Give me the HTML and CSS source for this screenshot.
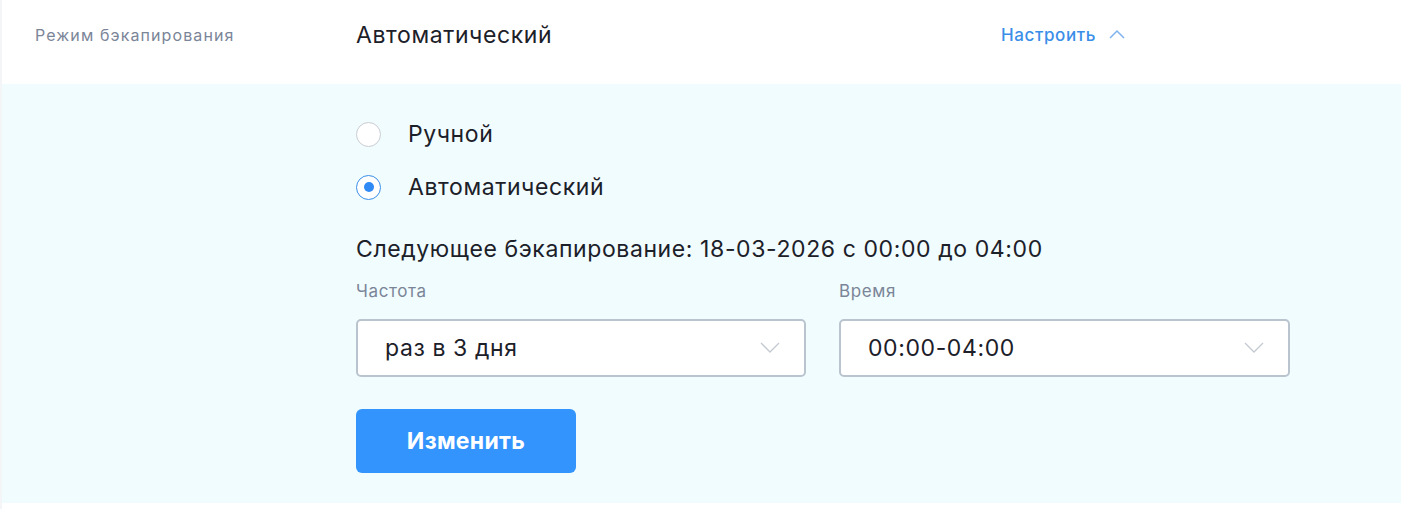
FILE: index.html
```html
<!DOCTYPE html>
<html lang="ru">
<head>
<meta charset="utf-8">
<link rel="stylesheet" href="styles.css">
</head>
<body>
<div class="page">
  <div class="row">
    <div class="row-label">Режим бэкапирования</div>
    <div class="row-value">Автоматический</div>
    <a class="row-action">Настроить
      <svg class="chev-up" width="16" height="10" viewBox="0 0 16 10"><path d="M1 9 L8 2 L15 9" fill="none" stroke="#7fb2ee" stroke-width="1.5"/></svg>
    </a>
  </div>
  <div class="panel">
    <div class="panel-body">
      <label class="radio"><span class="radio-dot"></span><span class="radio-text">Ручной</span></label>
      <label class="radio checked"><span class="radio-dot"></span><span class="radio-text">Автоматический</span></label>
      <div class="next">Следующее бэкапирование: 18-03-2026 с 00:00 до 04:00</div>
      <div class="fields">
        <div class="field">
          <div class="field-label">Частота</div>
          <div class="select"><span>раз в 3 дня</span>
            <svg width="20" height="12" viewBox="0 0 20 12"><path d="M1 1 L10 10 L19 1" fill="none" stroke="#c3c9d1" stroke-width="1.3"/></svg>
          </div>
        </div>
        <div class="field">
          <div class="field-label">Время</div>
          <div class="select"><span>00:00-04:00</span>
            <svg width="20" height="12" viewBox="0 0 20 12"><path d="M1 1 L10 10 L19 1" fill="none" stroke="#c3c9d1" stroke-width="1.3"/></svg>
          </div>
        </div>
      </div>
      <button class="btn">Изменить</button>
    </div>
  </div>
</div>
</body>
</html>
```
FILE: styles.css
```css
* { box-sizing: border-box; }
html, body { margin: 0; padding: 0; background: #ffffff; }
body { font-family: "Inter", "Noto Sans", sans-serif; color: #1c2029; }
.page { width: 1401px; height: 509px; border-left: 2px solid #f4f5f6; }
.row { height: 84px; display: flex; align-items: center; }
.row-label { width: 354px; padding-left: 33px; font-size: 16px; letter-spacing: 1.1px; color: #7b8598; padding-bottom: 14px; }
.row-value { width: 645px; font-size: 23px; letter-spacing: 0.6px; color: #1c2029; padding-bottom: 14px; }
.row-action { display: flex; align-items: center; gap: 13px; font-size: 17px; letter-spacing: 0.6px; font-weight: 500; color: #3b8ee8; padding-bottom: 14px; cursor: pointer; }
.chev-up { margin-top: -2px; }
.panel { background: #f0fcfd; height: 419px; width: 1399px; }
.panel-body { padding-left: 354px; padding-top: 38px; display: flex; flex-direction: column; }
.radio { display: flex; align-items: center; height: 24px; margin-bottom: 29px; }
.radio-dot { width: 25px; height: 25px; border-radius: 50%; border: 1px solid #c9cdd3; background: #fff; margin-right: 27px; position: relative; }
.radio.checked .radio-dot { border-color: #3b8ee8; }
.radio.checked .radio-dot::after { content: ""; position: absolute; left: 6.5px; top: 6.5px; width: 10px; height: 10px; border-radius: 50%; background: #2f8af5; }
.radio-text { font-size: 23px; letter-spacing: 0.6px; color: #1c2029; }
.next { font-size: 23px; letter-spacing: 0.6px; margin-top: 8px; line-height: 26px; }
.fields { display: flex; gap: 33px; margin-top: 19px; }
.field { width: 451px; }
.field:first-child { width: 450px; }
.field-label { font-size: 17px; letter-spacing: 0.6px; color: #7b8598; line-height: 20px; margin-bottom: 18px; }
.select { height: 58px; border: 2px solid #b9c4cf; border-radius: 5px; background: #fff; display: flex; align-items: center; justify-content: space-between; padding: 0 24px 0 27px; font-size: 23px; letter-spacing: 0.6px; }
.btn { margin-top: 32px; width: 220px; height: 64px; border: none; border-radius: 6px; background: #3394fe; color: #fff; font-family: inherit; font-size: 23px; letter-spacing: 0.3px; font-weight: 700; cursor: pointer; }
```
